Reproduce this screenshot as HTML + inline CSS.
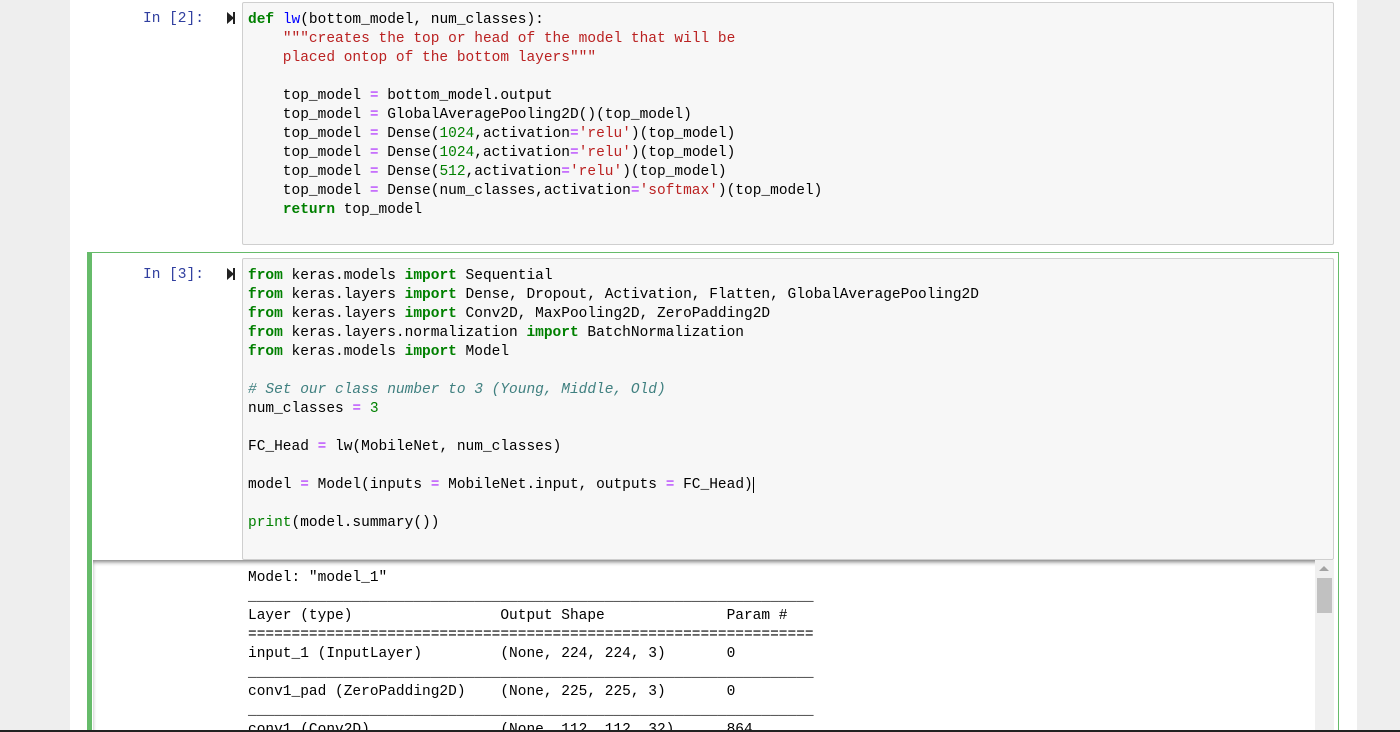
<!DOCTYPE html>
<html><head><style>
html,body{margin:0;height:732px;overflow:hidden;}
body{width:1400px;background:#eeeeee;position:relative;font-family:"Liberation Mono",monospace;}
.page{position:absolute;left:70px;top:0;width:1287px;height:732px;background:#fff;}
.box{position:absolute;background:#f7f7f7;border:1px solid #cfcfcf;border-radius:2px;}
pre{margin:0;font-family:"Liberation Mono",monospace;font-size:14.5px;line-height:19px;color:#000;position:absolute;white-space:pre;}
.p{position:absolute;font-family:"Liberation Mono",monospace;font-size:14.5px;color:#303F9F;}
.k{color:#008000;font-weight:bold}.s{color:#BA2121}.n{color:#008000}.o{color:#AA22FF}.f{color:#0000FF}.c{color:#408080;font-style:italic}.b{color:#008000}
.run{position:absolute;width:0;height:0;border-top:6px solid transparent;border-bottom:6px solid transparent;border-left:7px solid #222;}
.runb{position:absolute;width:2px;height:12px;background:#222;}
</style></head><body>
<div class="page"></div>
<div class="p" style="left:143px;top:11px">In [2]:</div>
<div class="run" style="left:227px;top:12px"></div><div class="runb" style="left:233px;top:12px"></div>
<div class="box" style="left:242px;top:2px;width:1090px;height:241px"></div>
<pre style="left:248px;top:11px"><span class="k">def</span> <span class="f">lw</span>(bottom_model, num_classes):
    <span class="s">"""creates the top or head of the model that will be
    placed ontop of the bottom layers"""</span>

    top_model <span class="o">=</span> bottom_model.output
    top_model <span class="o">=</span> GlobalAveragePooling2D()(top_model)
    top_model <span class="o">=</span> Dense(<span class="n">1024</span>,activation<span class="o">=</span><span class="s">'relu'</span>)(top_model)
    top_model <span class="o">=</span> Dense(<span class="n">1024</span>,activation<span class="o">=</span><span class="s">'relu'</span>)(top_model)
    top_model <span class="o">=</span> Dense(<span class="n">512</span>,activation<span class="o">=</span><span class="s">'relu'</span>)(top_model)
    top_model <span class="o">=</span> Dense(num_classes,activation<span class="o">=</span><span class="s">'softmax'</span>)(top_model)
    <span class="k">return</span> top_model</pre>

<div style="position:absolute;left:87px;top:252px;width:1252px;height:490px;border:1px solid #66BB6A;border-left:5px solid #66BB6A;box-sizing:border-box;"></div>
<div class="p" style="left:143px;top:267px">In [3]:</div>
<div class="run" style="left:227px;top:268px"></div><div class="runb" style="left:233px;top:268px"></div>
<div class="box" style="left:242px;top:258px;width:1090px;height:300px"></div>
<pre style="left:248px;top:267px"><span class="k">from</span> keras.models <span class="k">import</span> Sequential
<span class="k">from</span> keras.layers <span class="k">import</span> Dense, Dropout, Activation, Flatten, GlobalAveragePooling2D
<span class="k">from</span> keras.layers <span class="k">import</span> Conv2D, MaxPooling2D, ZeroPadding2D
<span class="k">from</span> keras.layers.normalization <span class="k">import</span> BatchNormalization
<span class="k">from</span> keras.models <span class="k">import</span> Model

<span class="c"># Set our class number to 3 (Young, Middle, Old)</span>
num_classes <span class="o">=</span> <span class="n">3</span>

FC_Head <span class="o">=</span> lw(MobileNet, num_classes)

model <span class="o">=</span> Model(inputs <span class="o">=</span> MobileNet.input, outputs <span class="o">=</span> FC_Head)<span style="border-left:1px solid #000"></span>

<span class="b">print</span>(model.summary())</pre>

<div style="position:absolute;left:93px;top:560px;width:1241px;height:172px;background:#fff;box-shadow:inset 0 3px 4px -1px rgba(0,0,0,.5);"></div>
<div style="position:absolute;left:1315px;top:560px;width:19px;height:172px;background:#f0f0f0;"></div>
<div style="position:absolute;left:1319px;top:566px;width:0;height:0;border-left:5px solid transparent;border-right:5px solid transparent;border-bottom:5px solid #a3a3a3;"></div>
<div style="position:absolute;left:1317px;top:578px;width:15px;height:35px;background:#c1c1c1;"></div>
<pre style="left:248px;top:569px">Model: "model_1"
_________________________________________________________________
Layer (type)                 Output Shape              Param #   
=================================================================
input_1 (InputLayer)         (None, 224, 224, 3)       0         
_________________________________________________________________
conv1_pad (ZeroPadding2D)    (None, 225, 225, 3)       0         
_________________________________________________________________
conv1 (Conv2D)               (None, 112, 112, 32)      864       </pre>
<div style="position:absolute;left:0;top:730px;width:1400px;height:2px;background:#222"></div>
</body></html>
